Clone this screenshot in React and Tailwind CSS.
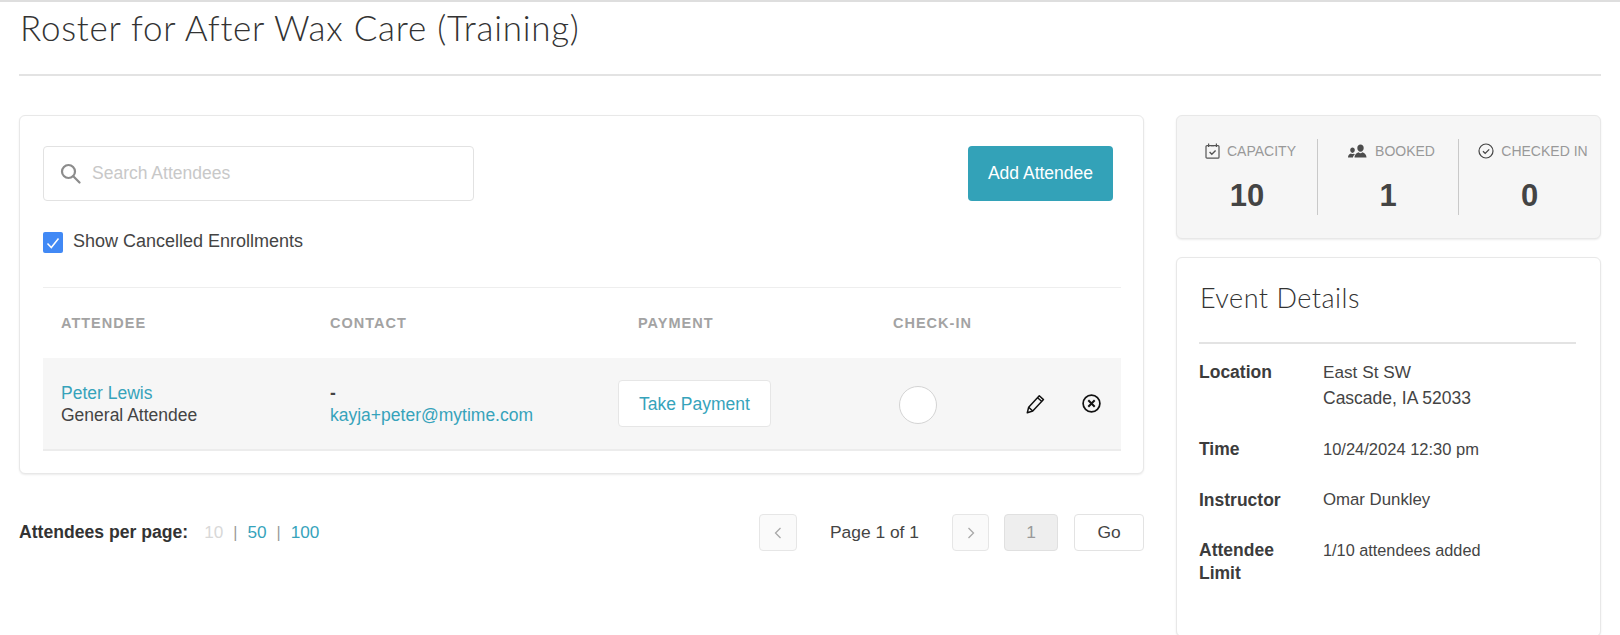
import React from "react";

const sans = "font-['Liberation_Sans',Arial,sans-serif]";
const light = "font-['Lato',sans-serif] font-light";

function CalendarIcon() {
  return (
    <svg width="15" height="16" viewBox="0 0 15 16" fill="none" stroke="#555" strokeWidth="1.2">
      <rect x="1" y="2.6" width="13" height="12.6" rx="1" />
      <path d="M3.6 .5v3.4M11.4 .5v3.4M6 2.6h3" />
      <path d="M4.6 9l2.2 2.2 3.8-3.8" strokeWidth="1.4" />
    </svg>
  );
}

function PeopleIcon() {
  return (
    <svg width="20" height="14" viewBox="0 0 20 14" fill="#4d4d4d">
      <path d="M12.500.5c1.900 0 3.200 1.500 3.200 3.500s-1.300 3.700-3.200 3.700S9.300 6 9.300 4s1.300-3.500 3.200-3.500z" />
      <path d="M6.500 13.500c0-2.800 1.600-4.300 4.200-5.300.5.600 1.100 1 1.800 1s1.300-.4 1.800-1c2.600 1 4.200 2.500 4.200 5.300z" />
      <path d="M4.500 3.500c1.300 0 2.300 1.100 2.300 2.600S5.800 8.900 4.500 8.900 2.200 7.600 2.200 6.100s1-2.600 2.300-2.600z" />
      <path d="M0 13.500c0-2 1-3.400 3-4 .5.400 1 .6 1.500.6s.9-.1 1.300-.4c.4.200.7.400 1 .7-1 .8-1.700 1.800-1.900 3.100z" />
    </svg>
  );
}

function CheckCircleIcon() {
  return (
    <svg width="16" height="16" viewBox="0 0 16 16" fill="none" stroke="#444" strokeWidth="1.2">
      <circle cx="8" cy="8" r="7" />
      <path d="M5 8.200l2.200 2.200 4-4" strokeWidth="1.300" />
    </svg>
  );
}

function SearchIcon() {
  return (
    <svg width="21" height="21" viewBox="0 0 21 21" fill="none" stroke="#8c8c8c" strokeWidth="2.200">
      <circle cx="8.500" cy="8.500" r="6.500" />
      <path d="M13.300 13.300l6.200 6.200" strokeLinecap="round" />
    </svg>
  );
}

function PencilIcon() {
  return (
    <svg width="19" height="20" viewBox="0 0 18 19" fill="none" stroke="#111" strokeWidth="1.400" strokeLinejoin="round">
      <path d="M1.200 17.800l1.300-5.200L12.600 1.700l4 3.600L6.400 16.200z" />
      <path d="M2.500 12.600l3.900 3.600M11 3.500l4 3.600" />
    </svg>
  );
}

function CloseCircleIcon() {
  return (
    <svg width="19" height="19" viewBox="0 0 19 19" fill="none" stroke="#111" strokeWidth="1.700">
      <circle cx="9.500" cy="9.500" r="8.400" />
      <path d="M6.300 6.300l6.400 6.400M12.700 6.300l-6.400 6.400" strokeWidth="2" />
    </svg>
  );
}

function Stat({ icon, label, value, divider }) {
  return (
    <div className={`flex h-[76px] flex-col items-center ${divider ? "border-r border-[#c9c9c9]" : ""}`}>
      <div className="mt-[3px] flex h-[18px] items-center gap-[7px] pl-[7px] whitespace-nowrap text-[14px] text-[#999]">
        {icon}
        <span>{label}</span>
      </div>
      <div className="mt-[19px] text-[31px] leading-[34px] font-bold text-[#444]">{value}</div>
    </div>
  );
}

function Detail({ label, children, className }) {
  return (
    <div className={`flex ${className}`}>
      <div className="w-[124px] shrink-0 pr-6 text-[17.500px] leading-[23px] font-bold text-[#3c3c3c]">{label}</div>
      <div className="leading-[22px] text-[#444]">{children}</div>
    </div>
  );
}

export default function App() {
  return (
    <div className={`h-[635px] overflow-hidden border-t-2 border-[#dedede] bg-white px-[19px] ${sans}`}>
      <h1 className={`ml-px h-[50px] text-[35px] leading-[50px] tracking-[0.75px] whitespace-nowrap text-[#333] ${light}`}>
        Roster for After Wax Care (Training)
      </h1>
      <div className="mt-[22px] h-[2px] bg-[#e3e3e3]" />

      <div className="mt-[39px] flex gap-8">
        <div className="w-[1125px] shrink-0">
          <div className="h-[359px] rounded-[6px] border border-[#e8e8e8] bg-white pt-[30px] pr-[22px] pl-[23px] shadow-[0_1px_2px_rgba(0,0,0,0.08)]">
            <div className="flex items-start justify-between pr-[8px]">
              <div className="flex h-[55px] w-[431px] items-center rounded-[4px] border border-[#e2e2e2] pl-[16px]">
                <SearchIcon />
                <span className="ml-[11px] text-[17.500px] text-[#c8c8c8]">Search Attendees</span>
              </div>
              <div className="flex h-[55px] w-[145px] items-center justify-center rounded-[4px] bg-[#33a2b8] text-[17.500px] text-white">
                Add Attendee
              </div>
            </div>

            <div className="mt-[31px] flex items-start gap-[10px]">
              <div className="flex h-[21px] w-[20px] items-center justify-center rounded-[2px] bg-[#4189f5]">
                <svg width="14" height="12" viewBox="0 0 14 12" fill="none" stroke="#fff" strokeWidth="1.500">
                  <path d="M1.500 6.500l3.800 4L12.500 1.500" />
                </svg>
              </div>
              <span className="-mt-[2px] text-[18px] leading-[22px] text-[#444]">Show Cancelled Enrollments</span>
            </div>

            <div className="mt-[34px] h-[71px] border-t border-[#eeeeee] pl-[17px]">
              <div className="grid h-[70px] grid-cols-[270px_288px_275px_auto] items-center pt-[2px] text-[14.500px] font-bold tracking-[1px] text-[#a3a3a3]">
                <div className="pl-px">ATTENDEE</div>
                <div>CONTACT</div>
                <div className="pl-[20px]">PAYMENT</div>
                <div>CHECK-IN</div>
              </div>
            </div>

            <div className="grid h-[93px] grid-cols-[270px_288px_275px_133px_56px_auto] items-center border-b-2 border-[#ececec] bg-[#f6f6f6] pl-[17px] text-[17.500px] leading-[22px] text-[#444]">
              <div className="pl-px">
                <div className="text-[#36a3bb]">Peter Lewis</div>
                <div>General Attendee</div>
              </div>
              <div>
                <div className="font-bold">-</div>
                <div className="text-[#36a3bb]">kayja+peter@mytime.com</div>
              </div>
              <div className="flex h-[47px] w-[153px] items-center justify-center rounded-[4px] border border-[#e6e6e6] bg-white text-[#36a3bb]">
                Take Payment
              </div>
              <div className="pt-[2px] pl-[6px]">
                <div className="h-[38px] w-[38px] rounded-full border border-[#d4d4d4] bg-white" />
              </div>
              <div className="flex">
                <PencilIcon />
              </div>
              <div className="flex">
                <CloseCircleIcon />
              </div>
            </div>
          </div>

          <div className="mt-[40px] flex h-[37px] items-center">
            <span className="text-[17.600px] font-bold text-[#333]">Attendees per page:</span>
            <span className="ml-[16px] text-[17.200px] text-[#d8d8d8]">10</span>
            <span className="mx-[10px] text-[16px] text-[#999]">|</span>
            <span className="text-[17.200px] text-[#36a3bb]">50</span>
            <span className="mx-[10px] text-[16px] text-[#999]">|</span>
            <span className="text-[17.200px] text-[#36a3bb]">100</span>
            <div className="ml-auto flex items-center text-[17.400px]">
              <div className="flex h-[37px] w-[38px] items-center justify-center rounded-[4px] border border-[#e6e6e6] bg-[#fafafa]">
                <svg width="8" height="12" viewBox="0 0 8 12" fill="none" stroke="#a8a8a8" strokeWidth="1.300">
                  <path d="M6.500 1L1.500 6l5 5" />
                </svg>
              </div>
              <span className="ml-[33px] w-[122px] text-[#444]">Page 1 of 1</span>
              <div className="flex h-[37px] w-[37px] items-center justify-center rounded-[4px] border border-[#e6e6e6] bg-[#fafafa]">
                <svg width="8" height="12" viewBox="0 0 8 12" fill="none" stroke="#a8a8a8" strokeWidth="1.300">
                  <path d="M1.500 1l5 5-5 5" />
                </svg>
              </div>
              <div className="ml-[15px] flex h-[37px] w-[54px] items-center justify-center rounded-[4px] border border-[#e0e0e0] bg-[#eeeeee] text-[#999]">
                1
              </div>
              <div className="ml-[16px] flex h-[37px] w-[70px] items-center justify-center rounded-[4px] border border-[#e3e3e3] bg-white text-[#444]">
                Go
              </div>
            </div>
          </div>
        </div>

        <div className="flex w-[425px] shrink-0 flex-col gap-[18px]">
          <div className="grid h-[124px] grid-cols-[141px_141px_1fr] rounded-[6px] border border-[#e8e8e8] bg-[#f6f6f6] pt-[23px] shadow-[0_1px_2px_rgba(0,0,0,0.08)]">
            <Stat icon={<CalendarIcon />} label="CAPACITY" value="10" divider />
            <Stat icon={<PeopleIcon />} label="BOOKED" value="1" divider />
            <Stat icon={<CheckCircleIcon />} label="CHECKED IN" value="0" />
          </div>

          <div className="h-[380px] rounded-[6px] border border-[#e8e8e8] bg-white pr-[24px] pl-[22px] shadow-[0_1px_2px_rgba(0,0,0,0.08)]">
            <h2 className={`mt-[21px] ml-px h-[38px] text-[27px] leading-[38px] tracking-[0.5px] text-[#333] ${light}`}>Event Details</h2>
            <div className="mt-[25px] h-[2px] bg-[#e3e3e3]" />
            <Detail label="Location" className="mt-[17px]">
              <div className="text-[17.200px]">East St SW</div>
              <div className="mt-[4px] text-[17.500px]">Cascade, IA 52033</div>
            </Detail>
            <Detail label="Time" className="mt-[29px]"><span className="text-[16.500px]">10/24/2024 12:30 pm</span></Detail>
            <Detail label="Instructor" className="mt-[28px]"><span className="text-[16.800px]">Omar Dunkley</span></Detail>
            <Detail label="Attendee Limit" className="mt-[27px]"><span className="text-[16.300px]">1/10 attendees added</span></Detail>
          </div>
        </div>
      </div>
    </div>
  );
}
